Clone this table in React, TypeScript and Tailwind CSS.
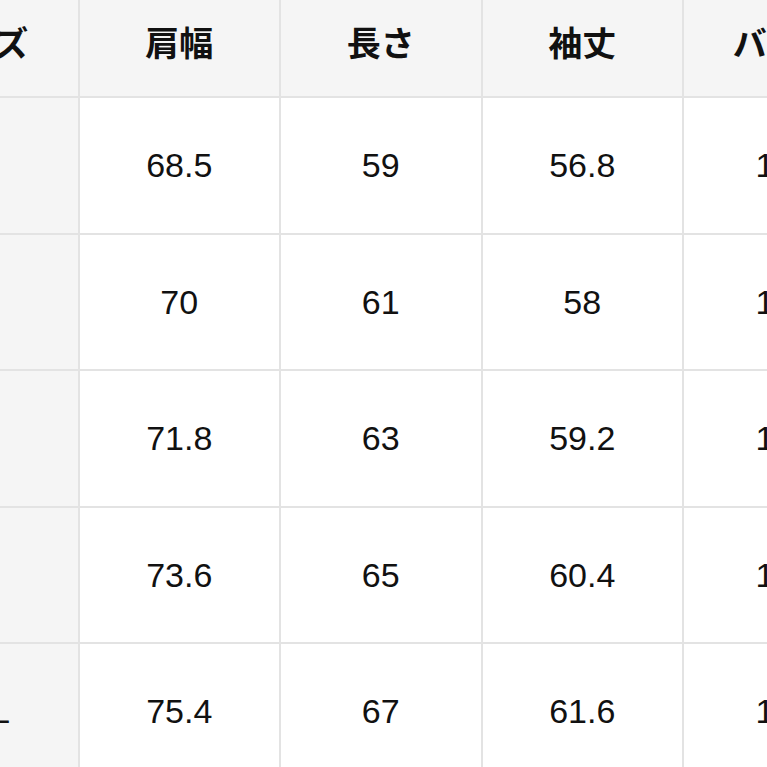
import React from "react";

const headers = ["サイズ", "肩幅", "長さ", "袖丈", "バスト"];
const rows: string[][] = [
  ["S", "68.5", "59", "56.8", "130"],
  ["M", "70", "61", "58", "134"],
  ["L", "71.8", "63", "59.2", "138"],
  ["XL", "73.6", "65", "60.4", "142"],
  ["XXL", "75.4", "67", "61.6", "146"],
];

export default function App() {
  return (
    <div
      className="w-[767px] h-[767px] overflow-hidden bg-white text-[#111111]"
      style={{ fontFamily: '"Liberation Sans", "Noto Sans CJK JP", sans-serif' }}
    >
      <div className="ml-[-122px] w-[1006px] grid grid-cols-[199.5px_199.5px_199.5px_199.5px_199.5px] grid-rows-[96px_134.5px_134.5px_134.5px_134.5px_134.5px] gap-[2px] bg-[#e3e3e3]">
        {headers.map((h) => (
          <div
            key={h}
            className="bg-[#f5f5f5] flex items-center justify-center pb-[8px] text-[34px] font-bold leading-none"
          >
            {h}
          </div>
        ))}
        {rows.map((r, i) =>
          r.map((c, j) => (
            <div
              key={`${i}-${j}`}
              className={`${j === 0 ? "bg-[#f5f5f5]" : "bg-white"} flex items-center justify-center text-[34px] leading-none`}
            >
              {c}
            </div>
          ))
        )}
      </div>
    </div>
  );
}
